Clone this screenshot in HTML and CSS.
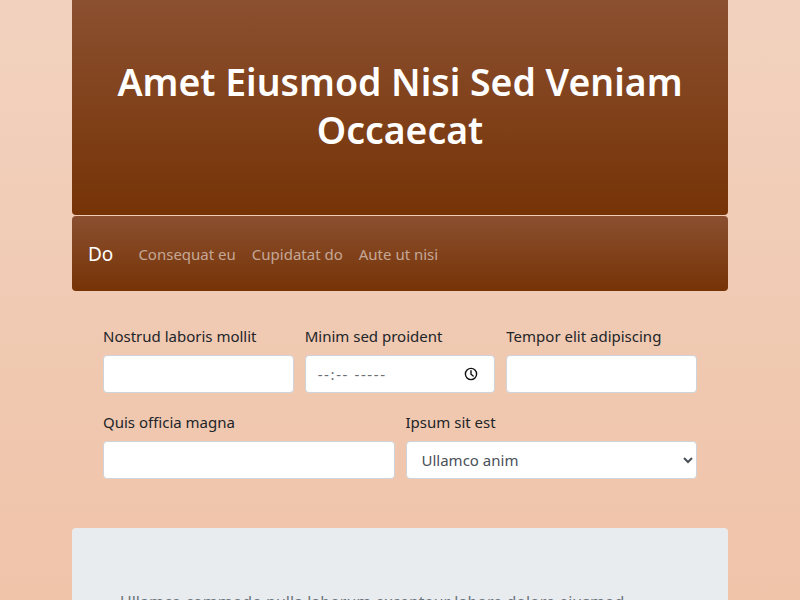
FILE: index.html
```html
<!DOCTYPE html>
<html lang="en">
<head>
<meta charset="utf-8">
<title>Amet Eiusmod</title>
<link rel="stylesheet" href="styles.css">
</head>
<body>
<div class="container">
  <header class="hero">
    <h1 class="hero-title">Amet Eiusmod Nisi Sed Veniam Occaecat</h1>
  </header>
  <nav class="navbar">
    <a class="brand" href="#">Do</a>
    <a class="nav-link" href="#">Consequat eu</a>
    <a class="nav-link" href="#">Cupidatat do</a>
    <a class="nav-link" href="#">Aute ut nisi</a>
  </nav>
  <form class="form">
    <div class="row row-3">
      <div class="field">
        <label class="label" for="f1">Nostrud laboris mollit</label>
        <input class="control" id="f1" type="text">
      </div>
      <div class="field">
        <label class="label" for="f2">Minim sed proident</label>
        <div class="time-wrap">
          <input class="control time" id="f2" type="text" placeholder="--:-- -----">
          <svg class="clock" width="14" height="14" viewBox="0 0 14 14" aria-hidden="true">
            <circle cx="7" cy="7" r="5.6" fill="none" stroke="#111" stroke-width="1.4"/>
            <path d="M7 3.8V7.2L9.2 9" fill="none" stroke="#111" stroke-width="1.4" stroke-linecap="round"/>
          </svg>
        </div>
      </div>
      <div class="field">
        <label class="label" for="f3">Tempor elit adipiscing</label>
        <input class="control" id="f3" type="text">
      </div>
    </div>
    <div class="row row-2">
      <div class="field">
        <label class="label" for="f4">Quis officia magna</label>
        <input class="control" id="f4" type="text">
      </div>
      <div class="field">
        <label class="label" for="f5">Ipsum sit est</label>
        <select class="control select" id="f5">
          <option>Ullamco anim</option>
          <option>Velit esse</option>
        </select>
      </div>
    </div>
  </form>
  <section class="panel">
    <p class="panel-text">Ullamco commodo nulla laborum excepteur labore dolore eiusmod.</p>
  </section>
</div>
</body>
</html>
```
FILE: styles.css
```css
html, body {
  margin: 0;
  padding: 0;
}
body {
  min-height: 600px;
  background: linear-gradient(180deg, #f2d2bf 0%, #f0c8b0 60%, #f0c3a8 100%);
  font-family: "Noto Sans", "Open Sans", "DejaVu Sans", sans-serif;
  color: #212529;
  overflow: hidden;
}
.container {
  width: 656px;
  margin: 0 auto;
}
.hero {
  height: 215px;
  box-sizing: border-box;
  display: flex;
  align-items: center;
  justify-content: center;
  background: linear-gradient(180deg, #8b5030 0%, #763306 100%);
  border-radius: 0 0 4px 4px;
  padding: 0 40px 4px;
}
.hero-title {
  margin: 0;
  color: #fff;
  font-size: 37.4px;
  font-weight: 600;
  line-height: 48px;
  text-align: center;
}
.navbar {
  margin-top: 1px;
  height: 75px;
  display: flex;
  align-items: center;
  padding: 0 16px;
  background: linear-gradient(180deg, #8b5030 0%, #763306 100%);
  border-radius: 4px;
}
.brand {
  color: #fff;
  font-size: 19px;
  text-decoration: none;
  margin-right: 17px;
}
.nav-link {
  color: rgba(255, 255, 255, 0.55);
  font-size: 15px;
  text-decoration: none;
  padding: 0 8px;
}
.form {
  padding: 35px 31px 0;
  display: flex;
  flex-direction: column;
  gap: 19px;
}
.row {
  display: grid;
  column-gap: 11px;
}
.row-3 {
  grid-template-columns: 1fr 1fr 1fr;
}
.row-2 {
  grid-template-columns: 1fr 1fr;
}
.field {
  display: flex;
  flex-direction: column;
}
.label {
  font-size: 15px;
  line-height: 22px;
  margin-bottom: 7px;
  margin-top: -1px;
  color: #212529;
}
.control {
  box-sizing: border-box;
  height: 38px;
  width: 100%;
  margin-top: 1px;
  border: 1px solid #ced4da;
  border-radius: 4px;
  background: #fff;
  padding: 6px 12px;
  font-family: inherit;
  font-size: 15px;
  color: #495057;
}
.time-wrap {
  position: relative;
}
.time {
  display: block;
}
.time::placeholder {
  color: #6b6f73;
  letter-spacing: 1.6px;
}
.clock {
  position: absolute;
  right: 17px;
  top: 13px;
}
.select {
  padding-left: 11px;
}
.panel {
  margin-top: 49px;
  height: 120px;
  background: #e9ecef;
  border-radius: 4px;
  padding: 63px 48px 0;
  box-sizing: border-box;
}
.panel-text {
  margin: 0;
  color: #6c757d;
  font-size: 16px;
}
```
